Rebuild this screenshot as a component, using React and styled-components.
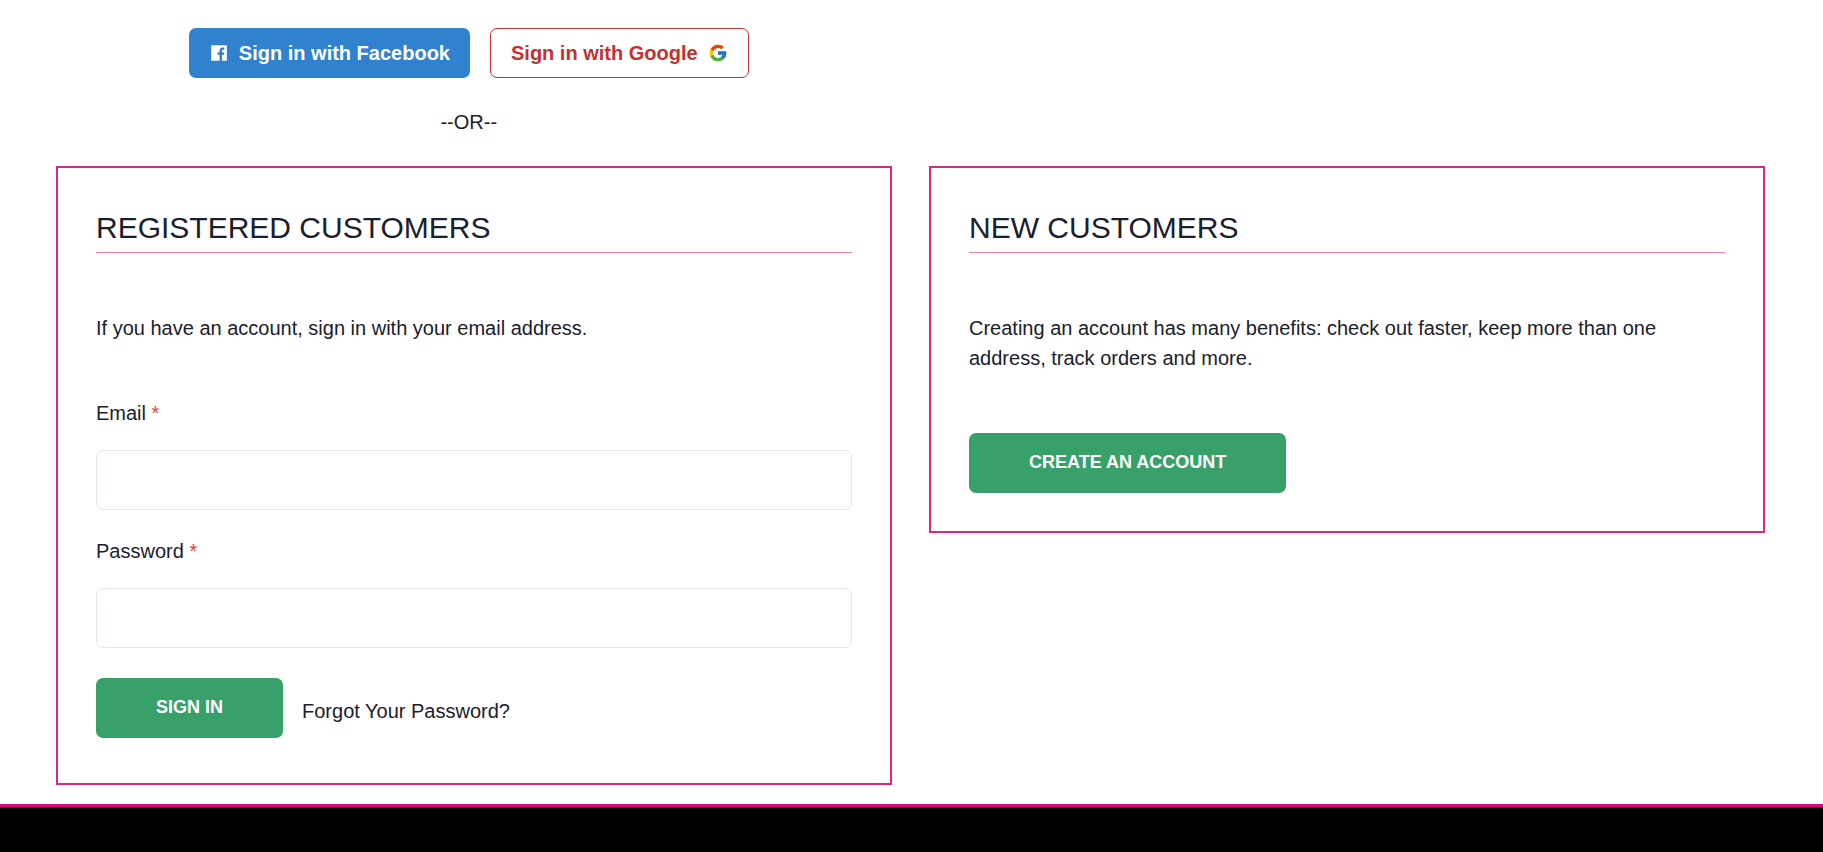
import React from "react";
import styled, { createGlobalStyle } from "styled-components";
import { AiFillFacebook } from "react-icons/ai";
import { FcGoogle } from "react-icons/fc";

const GlobalStyle = createGlobalStyle`
  *, *::before, *::after { box-sizing: border-box; }
  body {
    margin: 0;
    background: #ffffff;
    color: #1a202c;
    font-family: "Liberation Sans", Arial, sans-serif;
    font-size: 20px;
    line-height: 30px;
  }
  button, input { font: inherit; }
`;

const Page = styled.div`
  min-height: 100vh;
  display: flex;
  flex-direction: column;
`;

const SocialSection = styled.section`
  width: 50%;
  padding: 28px 0 29px 26px;
  display: flex;
  flex-direction: column;
  align-items: center;
  gap: 29px;
`;

const SocialButtons = styled.div`
  display: flex;
  gap: 20px;
`;

const SocialButton = styled.button`
  display: flex;
  align-items: center;
  gap: 10px;
  height: 50px;
  padding: 0 20px;
  border: ${(p) => (p.$outline ? "1px solid currentColor" : "none")};
  border-radius: 7px;
  background: ${(p) => (p.$outline ? "transparent" : "#3182ce")};
  color: ${(p) => (p.$outline ? "#c53030" : "#ffffff")};
  font-weight: 700;
  white-space: nowrap;
  cursor: pointer;

  svg {
    width: 20px;
    height: 20px;
    flex-shrink: 0;
  }
`;

const Divider = styled.p`
  margin: 0;
`;

const Columns = styled.main`
  display: grid;
  grid-template-columns: 1fr 1fr;
  align-items: start;
  gap: 37px;
  padding: 0 58px 19px 56px;
`;

const Card = styled.section`
  border: 2px solid #dd2788;
  padding: 38px;
`;

const CardTitle = styled.h2`
  margin: 0;
  padding-bottom: 2px;
  border-bottom: 1px solid #ed7ab8;
  font-size: 30px;
  line-height: 44px;
  font-weight: 400;
  text-transform: uppercase;
`;

const Intro = styled.p`
  margin: 60px 0 0;
`;

const Form = styled.form`
  margin-top: 55px;
  padding-bottom: 2px;
`;

const Field = styled.div`
  display: flex;
  flex-direction: column;
  gap: 22px;

  & + & {
    margin-top: 26px;
  }
`;

const Required = styled.span`
  color: #e53e3e;
`;

const TextInput = styled.input`
  width: 100%;
  height: 60px;
  padding: 0 20px;
  border: 1px solid #e2e8f0;
  border-radius: 7px;
  background: transparent;
  color: inherit;
`;

const Actions = styled.div`
  display: flex;
  align-items: center;
  gap: 19px;
  min-height: 65px;
  margin-top: 30px;
`;

const ActionButton = styled.button`
  align-self: flex-start;
  display: block;
  height: 60px;
  padding: 0 60px 3px;
  border: none;
  border-radius: 7px;
  background: #38a169;
  color: #ffffff;
  font-size: 18px;
  font-weight: 700;
  text-transform: uppercase;
  white-space: nowrap;
  cursor: pointer;
`;

const CreateAction = styled.div`
  margin-top: 60px;
`;

const TextLink = styled.a`
  color: inherit;
  text-decoration: none;
`;

const Footer = styled.footer`
  flex: 1;
  min-height: 48px;
  border-top: 3px solid #e00087;
  background: #000000;
`;

function LabeledInput({ id, label, type }) {
  return (
    <Field>
      <label htmlFor={id}>
        {label} <Required>*</Required>
      </label>
      <TextInput id={id} name={id} type={type} required />
    </Field>
  );
}

export default function App() {
  return (
    <Page>
      <GlobalStyle />
      <SocialSection>
        <SocialButtons>
          <SocialButton type="button">
            <AiFillFacebook aria-hidden="true" />
            Sign in with Facebook
          </SocialButton>
          <SocialButton type="button" $outline>
            Sign in with Google
            <FcGoogle aria-hidden="true" />
          </SocialButton>
        </SocialButtons>
        <Divider>--OR--</Divider>
      </SocialSection>

      <Columns>
        <Card>
          <CardTitle>Registered Customers</CardTitle>
          <Intro>If you have an account, sign in with your email address.</Intro>
          <Form onSubmit={(e) => e.preventDefault()}>
            <LabeledInput id="email" label="Email" type="email" />
            <LabeledInput id="password" label="Password" type="password" />
            <Actions>
              <ActionButton type="submit">Sign In</ActionButton>
              <TextLink href="#forgot-password">Forgot Your Password?</TextLink>
            </Actions>
          </Form>
        </Card>

        <Card>
          <CardTitle>New Customers</CardTitle>
          <Intro>
            Creating an account has many benefits: check out faster, keep more
            than one address, track orders and more.
          </Intro>
          <CreateAction>
            <ActionButton type="button">Create an Account</ActionButton>
          </CreateAction>
        </Card>
      </Columns>

      <Footer />
    </Page>
  );
}
